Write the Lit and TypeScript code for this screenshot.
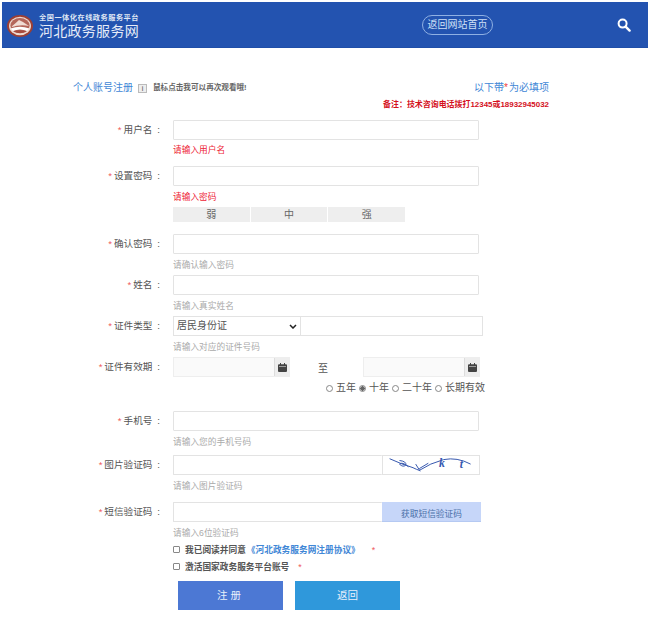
import { LitElement, html, css, svg } from "lit";
import { customElement } from "lit/decorators.js";

const CAL = svg`<svg width="9" height="9" viewBox="0 0 9 9"><path fill="#444" d="M0 2.2Q0 1.2 1 1.2H2V0H3V1.2H6V0H7V1.2H8Q9 1.2 9 2.2V8Q9 9 8 9H1Q0 9 0 8Z"/><rect x="1" y="3" width="7" height=".6" fill="#ddd"/></svg>`;

@customElement("app-root")
export class AppRoot extends LitElement {
  static styles = css`
    :host { display: block; width: 648px; height: 620px; overflow: hidden; background: #fff; color: #555;
      font-family: "Liberation Sans", "Noto Sans CJK SC", sans-serif; font-size: 10px; line-height: 1; }
    * { box-sizing: border-box; }
    header { margin: 2px 0 0 2px; height: 46px; background: #2353b0; border-bottom: 1px solid #1f4ea8; display: flex; align-items: center; padding-left: 5px; color: #fff; }
    .logo { width: 26px; height: 22px; margin-top: 3px; flex: none; }
    .brand { margin-left: 6px; display: flex; flex-direction: column; gap: 2px; width: 357px; margin-top: 3px; }
    .b1 { font-size: 7.2px; letter-spacing: .5px; font-weight: 700; line-height: 9px; color: #dfe6f4; }
    .b2 { font-size: 14px; letter-spacing: .28px; line-height: 15px; color: #e6ecf8; }
    .home { margin-left: 26px; width: 71px; height: 20px; border: 1px solid #8fb0e3; border-radius: 10px; color: #cfe0f7; font-size: 10px; display: flex; align-items: center; justify-content: center; }
    .search { margin-left: 124px; width: 14px; height: 14px; }
    .top { display: flex; justify-content: space-between; margin: 33px 99px 0 73px; height: 14px; align-items: center; }
    .top-left { display: flex; align-items: center; }
    .title { color: #3f87d6; font-size: 10px; }
    .info { width: 9px; height: 9px; margin: 0 6px 0 5px; border: 1px solid #bbb; background: #eee; font-size: 7px; display: flex; align-items: center; justify-content: center; color: #444; line-height: 1; }
    .tip { font-size: 7.6px; font-weight: 700; color: #666; }
    .required { color: #3f87d6; font-size: 10px; }
    .required i { color: #ef3b3b; font-style: normal; margin-right: 1px; }
    .note { margin: 5px 99px 0 0; text-align: right; color: #d4101c; font-size: 7.95px; font-weight: 700; line-height: 9px; }
    .form { margin-top: 11px; }
    .row { display: grid; grid-template-columns: 161px 1fr; column-gap: 12px; }
    .label { height: 20px; padding-right: 1px; display: flex; align-items: center; justify-content: flex-end; color: #555; font-size: 9.6px; white-space: pre; }
    .label i { color: #ef5a5a; font-style: normal; margin-right: 2px; }
    .label b { font-weight: 400; margin-left: 5px; }
    .ctrl { display: flex; align-items: stretch; height: 20px; }
    .input { display: block; width: 306px; height: 20px; border: 1px solid #e3e3e3; border-radius: 1px; background: #fff; }
    .hint { margin-top: 5px; font-size: 8.7px; line-height: 10px; color: #aaa; }
    .err { color: #ee1c35; }
    .r2 { margin-top: 11px; }
    .r2 .hint { margin-top: 6px; }
    .r3 { margin-top: 12px; }
    .r3 .hint, .r4 .hint, .r5 .hint, .r7 .hint, .r8 .hint, .r9 .hint { margin-top: 6px; }
    .r4, .r5 { margin-top: 5px; }
    .r6 { margin-top: 5px; }
    .r7 { margin-top: 18px; }
    .r8 { margin-top: 8px; }
    .r9 { margin-top: 11px; }
    .strength { display: flex; gap: 1px; margin-top: 5px; width: 232px; height: 15px; }
    .strength span { width: 77px; background: #eee; display: flex; align-items: center; justify-content: center; color: #666; font-size: 10px; }
    .sel { width: 127px; height: 20px; border: 1px solid #e3e3e3; border-right: none; background: #fff; display: flex; align-items: center; justify-content: space-between; padding: 0 3px; color: #555; font-size: 10px; }
    .idn { width: 183px; height: 20px; border: 1px solid #e3e3e3; }
    .dt { display: flex; width: 117px; height: 20px; border: 1px solid #eee; background: #fafafa; }
    .dt span:first-child { flex: 1; }
    .dt .cal { width: 15px; background: #eee; border-left: 1px solid #ddd; display: flex; align-items: center; justify-content: center; }
    .to { width: 73px; padding-left: 28px; display: flex; align-items: center; color: #555; font-size: 10px; padding-top: 3px; }
    .dt2 { width: 117px; }
    .radios { display: flex; justify-content: flex-end; align-items: center; gap: 3px; width: 312px; margin-top: 6px; height: 10px; color: #555; font-size: 10px; }
    .dot { width: 7px; height: 7px; border: 1px solid #888; border-radius: 50%; background: #fff; flex: none; }
    .dot.on { background: radial-gradient(circle, #666 0 2px, #fff 2.4px); }
    .input.short { width: 209px; border-right: none; }
    .captcha { width: 98px; height: 20px; border: 1px solid #e3e3e3; background: #fff; }
    .smsbtn { width: 99px; height: 20px; background: #c6d6f9; border-bottom: 1px solid #b5c9f2; color: #4a70a8; display: flex; align-items: flex-end; justify-content: center; padding-bottom: 2px; font-size: 8.7px; }
    .check { display: flex; align-items: center; margin-left: 173px; height: 10px; font-size: 8.7px; font-weight: 700; color: #555; }
    .box { width: 7px; height: 7px; border: 1px solid #888; border-radius: 1px; margin-right: 5px; background: #fff; margin-bottom: 1px; }
    .check a { color: #3f87d6; margin-left: 1px; }
    .check i { color: #ef5a5a; font-style: normal; font-weight: 400; }
    .c1 { margin-top: 7px; }
    .c1 i { margin-left: 12px; }
    .c2 { margin-top: 7px; }
    .c2 i { margin-left: 9px; }
    .actions { display: flex; gap: 12px; margin: 9px 0 0 178px; }
    .btn { width: 105px; height: 29px; color: #e8f0fb; font-size: 10.5px; display: flex; align-items: center; justify-content: center; }
    .reg { background: #4c78d4; letter-spacing: 3px; }
    .back { background: #2f98db; }
  `;

  private field(cls: string, label: string, body: unknown, hint?: string, err = false) {
    return html`<div class="row ${cls}">
      <div class="label"><i>*</i>${label}<b>:</b></div>
      <div>
        <div class="ctrl">${body}</div>
        ${hint ? html`<div class="hint ${err ? "err" : ""}">${hint}</div>` : ""}
      </div>
    </div>`;
  }

  private date(extra = "") {
    return html`<div class="dt ${extra}"><span></span><span class="cal">${CAL}</span></div>`;
  }

  render() {
    return html`
      <header>
        <svg class="logo" viewBox="0 0 26 22">
          <ellipse cx="13" cy="11" rx="13" ry="11" fill="#9d3f33"/>
          <ellipse cx="13" cy="11" rx="11" ry="9.2" fill="#ecd8cf"/>
          <ellipse cx="13" cy="10.5" rx="9.6" ry="7.6" fill="#b4665a"/>
          <path d="M4 12Q9 8 12 5L16 7L22 11Q14 9 4 12Z" fill="#f0dcd4"/>
          <path d="M3.6 13.5Q13 10 22.4 13.5L20 16Q13 13 6 16Z" fill="#fff"/>
          <path d="M6 16.5Q13 13.8 20 16.5Q13 20 6 16.5Z" fill="#a64a3d"/>
        </svg>
        <div class="brand">
          <div class="b1">全国一体化在线政务服务平台</div>
          <div class="b2">河北政务服务网</div>
        </div>
        <div class="home">返回网站首页</div>
        <svg class="search" viewBox="0 0 14 14"><circle cx="5.6" cy="5.6" r="4" fill="none" stroke="#fff" stroke-width="2"/><path d="M8.6 8.6L12.6 12.6" stroke="#fff" stroke-width="2.4" stroke-linecap="round"/></svg>
      </header>

      <div class="top">
        <div class="top-left"><span class="title">个人账号注册</span><span class="info">i</span><span class="tip">鼠标点击我可以再次观看哦!</span></div>
        <div class="required">以下带<i>*</i>为必填项</div>
      </div>
      <div class="note">备注：技术咨询电话拨打12345或18932945032</div>

      <div class="form">
        ${this.field("r1", "用户名", html`<span class="input"></span>`, "请输入用户名", true)}
        <div class="row r2">
          <div class="label"><i>*</i>设置密码<b>:</b></div>
          <div>
            <div class="ctrl"><span class="input"></span></div>
            <div class="hint err">请输入密码</div>
            <div class="strength"><span>弱</span><span>中</span><span>强</span></div>
          </div>
        </div>
        ${this.field("r3", "确认密码", html`<span class="input"></span>`, "请确认输入密码")}
        ${this.field("r4", "姓名", html`<span class="input"></span>`, "请输入真实姓名")}
        ${this.field("r5", "证件类型", html`<div class="sel"><span>居民身份证</span><svg width="8" height="5" viewBox="0 0 8 5"><path d="M1 1L4 4L7 1" fill="none" stroke="#222" stroke-width="1.5"/></svg></div><span class="idn"></span>`, "请输入对应的证件号码")}
        <div class="row r6">
          <div class="label"><i>*</i>证件有效期<b>:</b></div>
          <div>
            <div class="ctrl">${this.date()}<span class="to">至</span>${this.date("dt2")}</div>
            <div class="radios">
              <span class="dot"></span><span>五年</span>
              <span class="dot on"></span><span>十年</span>
              <span class="dot"></span><span>二十年</span>
              <span class="dot"></span><span>长期有效</span>
            </div>
          </div>
        </div>
        ${this.field("r7", "手机号", html`<span class="input"></span>`, "请输入您的手机号码")}
        ${this.field("r8", "图片验证码", html`<span class="input short"></span>
          <svg class="captcha" viewBox="0 0 98 20">
            <path d="M3 3Q16 9 29 13Q33 15 36 16Q48 8 63 4Q78 1 93 9M14 5Q22 6 21 10Q18 13 14 9Q17 6 24 12M32 9L37 17M46 8L36 14" fill="none" stroke="#3657ae" stroke-width="1.1"/>
            <text x="58" y="12" font-family="Liberation Serif" font-style="italic" font-size="13" font-weight="700" fill="#3657ae">k</text>
            <text x="81" y="13" font-family="Liberation Serif" font-style="italic" font-size="13" font-weight="700" fill="#3657ae">t</text>
          </svg>`, "请输入图片验证码")}
        ${this.field("r9", "短信验证码", html`<span class="input short"></span><div class="smsbtn">获取短信验证码</div>`, "请输入6位验证码")}
        <div class="check c1"><span class="box"></span>我已阅读并同意<a>《河北政务服务网注册协议》</a><i>*</i></div>
        <div class="check c2"><span class="box"></span>激活国家政务服务平台账号<i>*</i></div>
        <div class="actions"><div class="btn reg">注册</div><div class="btn back">返回</div></div>
      </div>
    `;
  }
}
